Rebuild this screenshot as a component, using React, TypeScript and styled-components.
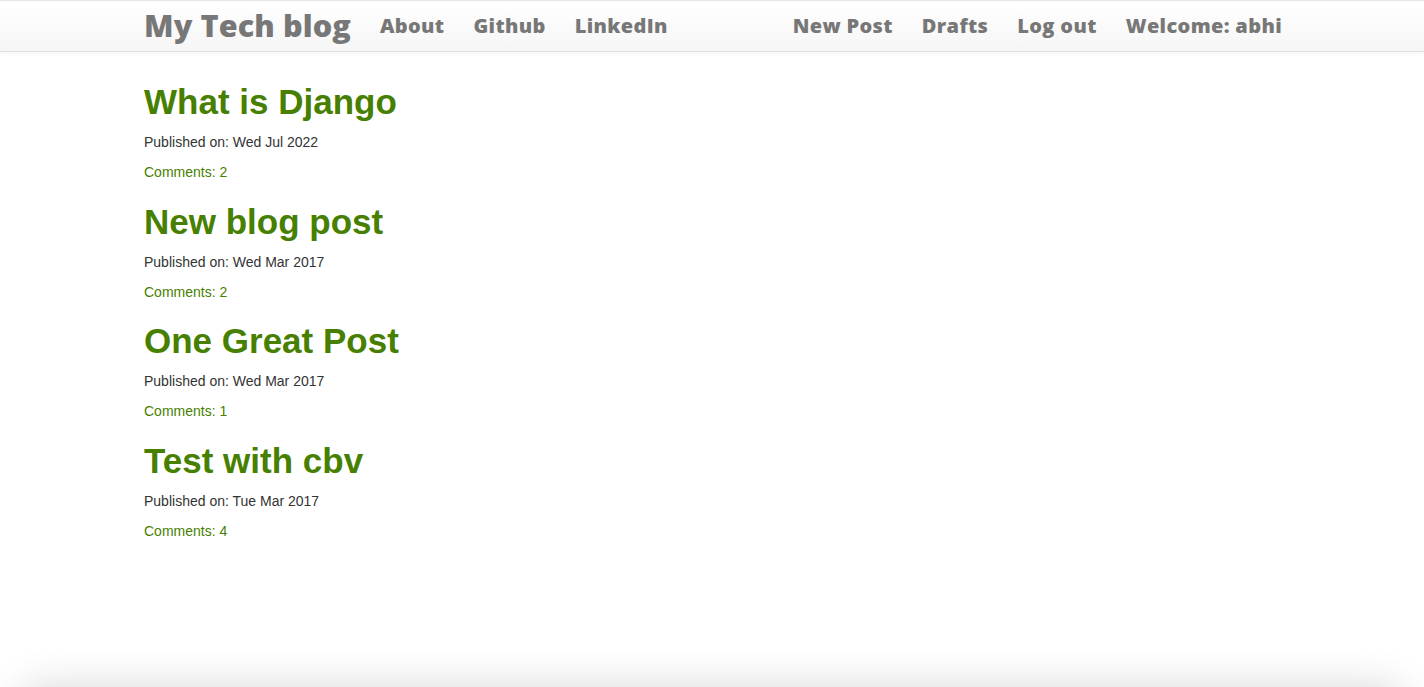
import React from "react";
import styled, { createGlobalStyle } from "styled-components";

const Global = createGlobalStyle`
  html, body { margin: 0; padding: 0; background: #fff; }
  body { font-family: "Liberation Sans", Arial, sans-serif; font-size: 14px; color: #333; }
  * { box-sizing: border-box; }
`;

const Page = styled.div`
  min-height: calc(100vh + 60px);
  display: flex;
  flex-direction: column;
`;

const Navbar = styled.nav`
  height: 52px;
  border-top: 1px solid #e6e6e6;
  border-bottom: 1px solid #e2e2e2;
  background: linear-gradient(to bottom, #ffffff 0%, #f6f6f6 100%);
  box-shadow: 0 1px 5px rgba(0, 0, 0, 0.06);
`;

const Container = styled.div`
  width: 1170px;
  margin: 0 auto;
  padding: 0 15px 0 17px;
`;

const NavInner = styled(Container)`
  height: 100%;
  display: flex;
  align-items: center;
  justify-content: space-between;
  padding-bottom: 2px;
`;

const NavGroup = styled.div`
  display: flex;
  align-items: center;
  gap: 29px;
`;

const Brand = styled.a`
  font-family: "Open Sans", sans-serif;
  font-weight: 800;
  font-size: 30.6px;
  color: #777;
  text-decoration: none;
  letter-spacing: 0.1px;
`;

const NavLink = styled.a`
  font-family: "Open Sans", sans-serif;
  font-weight: 800;
  font-size: 20px;
  color: #777;
  text-decoration: none;
  letter-spacing: 0.35px;
`;

const Main = styled(Container)`
  flex: 1;
  padding-top: 28px;
`;

const Post = styled.article`
  margin-bottom: 17.5px;
`;

const Title = styled.h1`
  margin: 0 0 8px;
  font-size: 35px;
  font-weight: 700;
  line-height: 44px;
  color: #478000;
`;

const Meta = styled.p`
  margin: 0 0 10px;
  font-size: 14px;
  line-height: 20px;
  color: #333;
`;

const Comments = styled.a`
  display: block;
  font-size: 14px;
  line-height: 20px;
  color: #478000;
  text-decoration: none;
`;

const Footer = styled.footer`
  height: 60px;
  margin: 0 20px;
  border-radius: 20px;
  box-shadow: 0 0 40px rgba(0, 0, 0, 0.16);
`;

const posts = [
  { title: "What is Django", date: "Wed Jul 2022", comments: 2 },
  { title: "New blog post", date: "Wed Mar 2017", comments: 2 },
  { title: "One Great Post", date: "Wed Mar 2017", comments: 1 },
  { title: "Test with cbv", date: "Tue Mar 2017", comments: 4 },
];

export default function App() {
  return (
    <Page>
      <Global />
      <Navbar>
        <NavInner>
          <NavGroup>
            <Brand href="#">My Tech blog</Brand>
            <NavLink href="#">About</NavLink>
            <NavLink href="#">Github</NavLink>
            <NavLink href="#">LinkedIn</NavLink>
          </NavGroup>
          <NavGroup>
            <NavLink href="#">New Post</NavLink>
            <NavLink href="#">Drafts</NavLink>
            <NavLink href="#">Log out</NavLink>
            <NavLink href="#">Welcome: abhi</NavLink>
          </NavGroup>
        </NavInner>
      </Navbar>
      <Main>
        {posts.map((p) => (
          <Post key={p.title}>
            <Title>{p.title}</Title>
            <Meta>Published on: {p.date}</Meta>
            <Comments href="#">Comments: {p.comments}</Comments>
          </Post>
        ))}
      </Main>
      <Footer />
    </Page>
  );
}
